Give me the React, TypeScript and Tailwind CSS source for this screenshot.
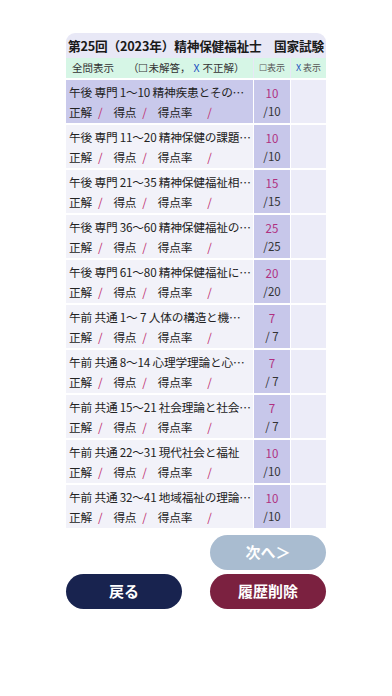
import React from "react";

const rows = [
  { t: "午後 専門 1〜10 精神疾患とその…", n: "10", sel: true },
  { t: "午後 専門 11〜20 精神保健の課題…", n: "10" },
  { t: "午後 専門 21〜35 精神保健福祉相…", n: "15" },
  { t: "午後 専門 36〜60 精神保健福祉の…", n: "25" },
  { t: "午後 専門 61〜80 精神保健福祉に…", n: "20" },
  { t: "午前 共通 1〜 7 人体の構造と機…", n: "7", sp: true },
  { t: "午前 共通 8〜14 心理学理論と心…", n: "7", sp: true },
  { t: "午前 共通 15〜21 社会理論と社会…", n: "7", sp: true },
  { t: "午前 共通 22〜31 現代社会と福祉", n: "10" },
  { t: "午前 共通 32〜41 地域福祉の理論…", n: "10" },
];

export default function App() {
  return (
    <div
      className="w-[392px] h-[696px] bg-white pt-[33px] px-[66px]"
      style={{ fontFamily: '"Noto Sans CJK JP", "Noto Sans", sans-serif' }}
    >
      <div className="bg-[#e8e8f6] rounded-t-[9px] overflow-hidden">
        <div className="h-[25px] flex items-center pl-[2px] text-[12.7px] font-bold text-[#1a1a1a] whitespace-nowrap tracking-[-0.2px]">
          第25回（2023年）精神保健福祉士　国家試験
        </div>
        <div className="flex h-[20px] gap-[1px]">
          <div className="w-[187px] bg-[#d6f6e6] flex items-center pl-[6px] text-[10.5px] text-[#333] whitespace-nowrap">
            <span>全問表示</span>
            <span className="ml-[14px]">（☐未解答，<span className="text-[#2050c0] mx-[3px]">X</span>不正解）</span>
          </div>
          <div className="w-[36px] bg-[#d6f6e6] flex items-center justify-center text-[9px] text-[#555] whitespace-nowrap">
            ☐表示
          </div>
          <div className="flex-1 bg-[#d6f6e6] flex items-center justify-center text-[9px] text-[#555] whitespace-nowrap">
            <span className="text-[#2050c0] mr-[2px]">X</span>表示
          </div>
        </div>
        <div className="flex flex-col gap-[2px] pt-[2px] bg-white">
          {rows.map((r, i) => (
            <div key={i} className="flex h-[43px] gap-[1px]">
              <div
                className={`w-[187px] ${r.sel ? "bg-[#c9c9eb]" : "bg-[#f2f2f9]"} flex flex-col justify-center pl-[3px] text-[11.7px] leading-[20px] text-[#222] whitespace-nowrap overflow-hidden tracking-[-0.2px]`}
              >
                <div>{r.t}</div>
                <div className="flex">
                  <span>正解</span>
                  <span className="text-[#c03070] ml-[6px] mr-[11px]">/</span>
                  <span>得点</span>
                  <span className="text-[#c03070] ml-[6px] mr-[11px]">/</span>
                  <span>得点率</span>
                  <span className="text-[#c03070] ml-[15px]">/</span>
                </div>
              </div>
              <div className="w-[36px] bg-[#c7c7ea] flex flex-col items-center justify-center text-[11.5px] leading-[18px]">
                <div className="text-[#b03080]">{r.n}</div>
                <div className="text-[#333]">{r.sp ? "/ " : "/"}{r.n}</div>
              </div>
              <div className="flex-1 bg-[#ececf8]" />
            </div>
          ))}
        </div>
      </div>
      <div className="flex justify-end mt-[7px]">
        <div className="w-[116px] h-[35px] rounded-full bg-[#a9bcd0] flex items-center justify-center text-white text-[15px] font-bold">
          次へ＞
        </div>
      </div>
      <div className="flex justify-between mt-[4px]">
        <div className="w-[116px] h-[35px] rounded-full bg-[#18234f] flex items-center justify-center text-white text-[15px] font-bold">
          戻る
        </div>
        <div className="w-[116px] h-[35px] rounded-full bg-[#7b2140] flex items-center justify-center text-white text-[15px] font-bold">
          履歴削除
        </div>
      </div>
    </div>
  );
}
